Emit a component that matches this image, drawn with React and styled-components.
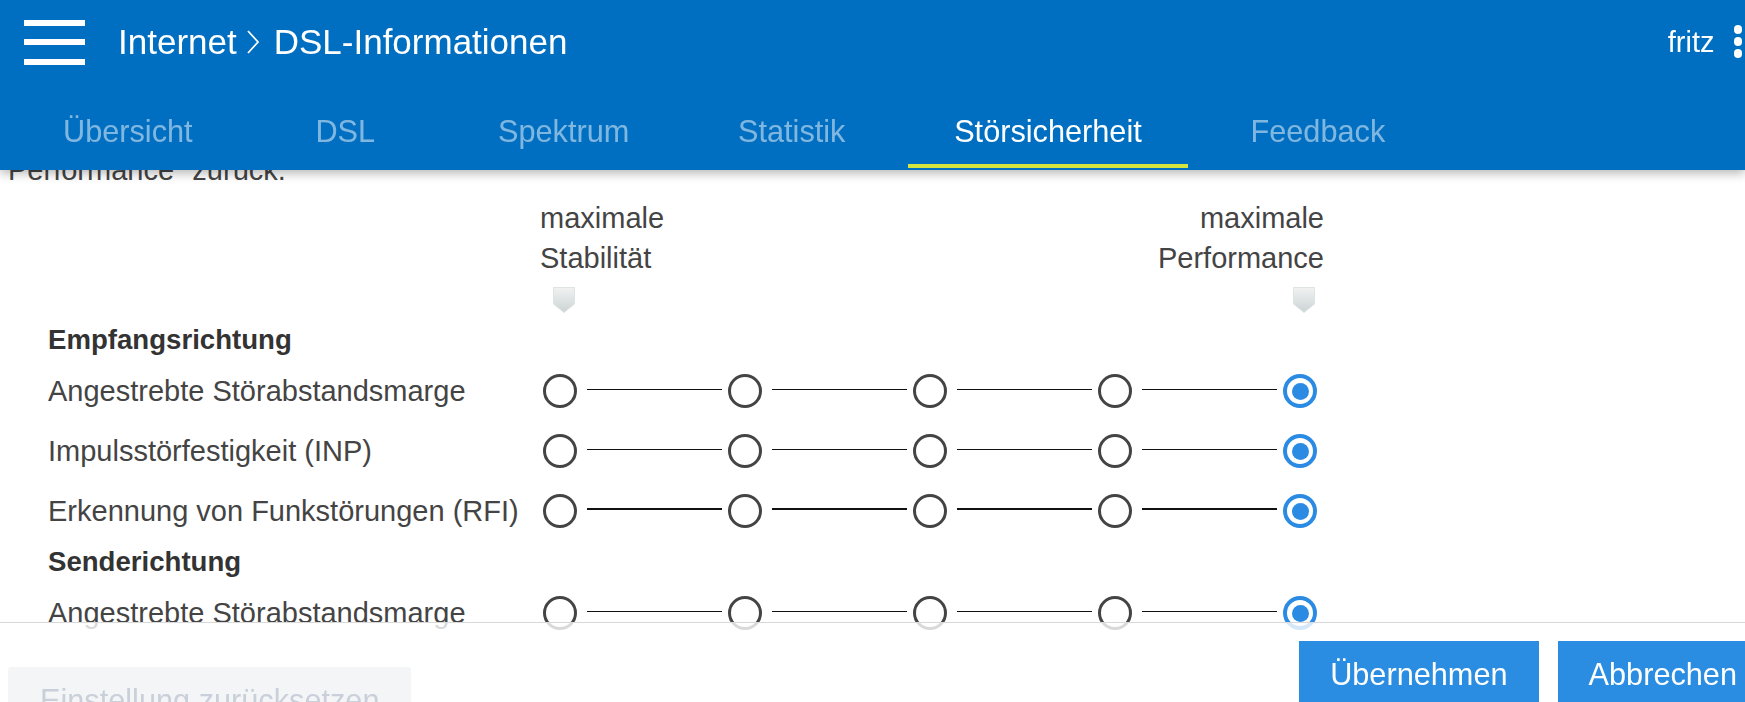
import React from 'react';
import styled, { createGlobalStyle, css } from 'styled-components';

const GlobalStyle = createGlobalStyle`
  html, body { margin: 0; padding: 0; background: #fff; overflow: hidden; }
  body { font-family: "Liberation Sans", Arial, Helvetica, sans-serif; color: #444; }
  * { box-sizing: border-box; }
`;

const Header = styled.header`
  position: fixed;
  top: 0;
  left: 0;
  right: 0;
  height: 170px;
  background: #006fc1;
  z-index: 10;
  box-shadow: 0 3px 10px rgba(0, 0, 0, 0.3);
  display: flex;
  flex-direction: column;
`;

const TopBar = styled.div`
  height: 84px;
  display: flex;
  align-items: center;
  padding-left: 24px;
`;

const Burger = styled.button`
  width: 61px;
  height: 45px;
  padding: 0;
  border: 0;
  background: none;
  display: flex;
  flex-direction: column;
  justify-content: space-between;
  cursor: pointer;
`;

const BurgerBar = styled.span`
  display: block;
  height: 6px;
  background: #fff;
`;

const Title = styled.h1`
  margin: 0 0 0 33px;
  font-size: 35px;
  font-weight: 400;
  color: #fff;
  display: flex;
  align-items: center;
  white-space: nowrap;
`;

const Crumb = styled.span``;

const Chevron = styled.svg`
  margin: 0 14px 0 9px;
  display: block;
`;

const User = styled.div`
  margin-left: auto;
  display: flex;
  align-items: center;
  color: #fff;
  font-size: 29px;
  margin-right: 3px;
`;

const Dots = styled.div`
  display: flex;
  flex-direction: column;
  gap: 3.5px;
  margin-left: 19px;
  margin-top: -1px;
`;

const Dot = styled.span`
  width: 8.5px;
  height: 8.5px;
  border-radius: 50%;
  background: #fff;
`;

const TabBar = styled.nav`
  flex: 1;
  display: flex;
  padding-left: 17px;
  gap: 16.7px;
`;

const Tab = styled.a`
  min-width: 180px;
  padding: 15px 46px 0;
  margin-bottom: 2px;
  display: flex;
  align-items: center;
  justify-content: center;
  font-size: 30.7px;
  color: rgba(255, 255, 255, 0.5);
  border-bottom: 4px solid transparent;
  white-space: nowrap;
  cursor: pointer;
  ${(p) =>
    p.$active &&
    css`
      color: #fff;
      border-bottom-color: #d6e43f;
    `}
`;

const Main = styled.main`
  padding-top: 150px;
`;

const Intro = styled.p`
  margin: 0;
  padding-left: 8px;
  font-size: 29px;
  line-height: 40px;
  color: #444;
`;

const Form = styled.section`
  padding-left: 48px;
  margin-top: 8px;
`;

const ScaleLabels = styled.div`
  margin-left: 492px;
  width: 784px;
  display: flex;
  justify-content: space-between;
  font-size: 29px;
  line-height: 40px;
  color: #444;
`;

const ScaleLabel = styled.div`
  text-align: ${(p) => (p.$right ? 'right' : 'left')};
`;

const MarkerRow = styled.div`
  margin: 9px 0 6px 499px;
  width: 774px;
  height: 26px;
  display: flex;
  justify-content: space-between;
`;

const MarkerCell = styled.div`
  width: 34px;
  display: flex;
  justify-content: center;
`;

const Heading = styled.h2`
  margin: 0;
  font-size: 27.6px;
  font-weight: 700;
  line-height: 42px;
  color: #333;
`;

const Row = styled.div`
  display: flex;
  align-items: center;
  height: 60px;
`;

const RowLabel = styled.div`
  width: 495px;
  font-size: 29px;
  color: #444;
  white-space: nowrap;
`;

const Slider = styled.div`
  width: 774px;
  display: flex;
  align-items: center;
`;

const Radio = styled.span`
  position: relative;
  flex: none;
  width: 34px;
  height: 34px;
  border-radius: 50%;
  border: 3px solid #444;
  ${(p) =>
    p.$checked &&
    css`
      border: 4px solid #2b8be3;
      &::after {
        content: '';
        position: absolute;
        left: 50%;
        top: 50%;
        width: 17px;
        height: 17px;
        margin: -8.5px 0 0 -8.5px;
        border-radius: 50%;
        background: #2b8be3;
      }
    `}
`;

const Connector = styled.span`
  flex: 1;
  height: ${(p) => (p.$thick ? 2 : 1)}px;
  background: #111;
  margin: 0 6px 0 10px;
  transform: translateY(-2px);
`;

const Footer = styled.footer`
  position: fixed;
  top: 622px;
  left: 0;
  right: -23px;
  height: 120px;
  background: rgba(255, 255, 255, 0.8);
  border-top: 1px solid #d8d8d8;
  display: flex;
  align-items: flex-start;
  padding-left: 8px;
  z-index: 5;
`;

const Button = styled.button`
  font-family: inherit;
  font-size: 30.7px;
  line-height: normal;
  padding: 16px 31px;
  border: 0;
  border-radius: 0;
  background: #2a8de1;
  color: #fff;
  white-space: nowrap;
  cursor: pointer;
  ${(p) =>
    p.$disabled &&
    css`
      margin-top: 44px;
      padding: 16px 32px;
      background: #f4f5f7;
      color: #c9d0da;
      border-radius: 3px;
      cursor: default;
    `}
`;

const ButtonGroup = styled.div`
  margin-left: auto;
  margin-top: 18px;
  display: flex;
  gap: 19px;
`;

function Marker() {
  return (
    <svg width="22" height="26" viewBox="0 0 22 26">
      <defs>
        <linearGradient id="mk" x1="0" y1="0" x2="0" y2="1">
          <stop offset="0" stopColor="#f1f2f2" />
          <stop offset="1" stopColor="#cbd3d4" />
        </linearGradient>
      </defs>
      <path d="M0.5 0.5 H21.5 V17 L11 25.5 L0.5 17 Z" fill="url(#mk)" stroke="#dfe3e4" strokeWidth="1" />
    </svg>
  );
}

function SliderRow({ label, value, thick }) {
  const steps = [0, 1, 2, 3, 4];
  return (
    <Row>
      <RowLabel>{label}</RowLabel>
      <Slider>
        {steps.map((s) => (
          <React.Fragment key={s}>
            <Radio $checked={s === value} />
            {s < 4 && <Connector $thick={thick} />}
          </React.Fragment>
        ))}
      </Slider>
    </Row>
  );
}

const tabs = ['Übersicht', 'DSL', 'Spektrum', 'Statistik', 'Störsicherheit', 'Feedback'];

export default function App() {
  return (
    <>
      <GlobalStyle />
      <Header>
        <TopBar>
          <Burger aria-label="Menü">
            <BurgerBar />
            <BurgerBar />
            <BurgerBar />
          </Burger>
          <Title>
            <Crumb>Internet</Crumb>
            <Chevron width="14" height="26" viewBox="0 0 14 26">
              <polyline points="2,2 12,13 2,24" fill="none" stroke="#fff" strokeWidth="1.8" />
            </Chevron>
            <Crumb>DSL-Informationen</Crumb>
          </Title>
          <User>
            fritz
            <Dots>
              <Dot />
              <Dot />
              <Dot />
            </Dots>
          </User>
        </TopBar>
        <TabBar>
          {tabs.map((t) => (
            <Tab key={t} $active={t === 'Störsicherheit'}>
              {t}
            </Tab>
          ))}
        </TabBar>
      </Header>

      <Main>
        <Intro>Performance" zurück.</Intro>
        <Form>
          <ScaleLabels>
            <ScaleLabel>
              maximale
              <br />
              Stabilität
            </ScaleLabel>
            <ScaleLabel $right>
              maximale
              <br />
              Performance
            </ScaleLabel>
          </ScaleLabels>
          <MarkerRow>
            <MarkerCell>
              <Marker />
            </MarkerCell>
            <MarkerCell>
              <Marker />
            </MarkerCell>
          </MarkerRow>
          <Heading>Empfangsrichtung</Heading>
          <SliderRow label="Angestrebte Störabstandsmarge" value={4} />
          <SliderRow label="Impulsstörfestigkeit (INP)" value={4} />
          <SliderRow label="Erkennung von Funkstörungen (RFI)" value={4} thick />
          <Heading>Senderichtung</Heading>
          <SliderRow label="Angestrebte Störabstandsmarge" value={4} />
        </Form>
      </Main>

      <Footer>
        <Button $disabled disabled>
          Einstellung zurücksetzen
        </Button>
        <ButtonGroup>
          <Button>Übernehmen</Button>
          <Button>Abbrechen</Button>
        </ButtonGroup>
      </Footer>
    </>
  );
}
